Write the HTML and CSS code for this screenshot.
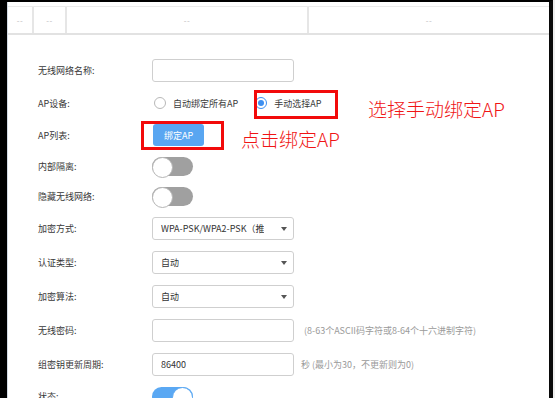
FILE: index.html
```html
<!DOCTYPE html>
<html lang="zh-CN">
<head>
<meta charset="utf-8">
<link rel="stylesheet" href="styles.css">
</head>
<body>
<div class="frame">
  <div class="panel">
    <div class="thead">
      <div class="th c1">--</div>
      <div class="th c2">--</div>
      <div class="th c3">--</div>
      <div class="th c4">--</div>
    </div>
    <div class="form">
      <div class="row">
        <span class="label">无线网络名称:</span>
        <div class="field"></div>
      </div>
      <div class="row row-radio">
        <span class="label">AP设备:</span>
        <div class="radios">
          <span class="radio"><i class="circle"></i>自动绑定所有AP</span>
          <span class="radio on"><i class="circle"></i>手动选择AP</span>
        </div>
      </div>
      <div class="row row-btn">
        <span class="label">AP列表:</span>
        <span class="btn">绑定AP</span>
      </div>
      <div class="row row-toggle">
        <span class="label">内部隔离:</span>
        <span class="toggle"></span>
      </div>
      <div class="row row-toggle">
        <span class="label">隐藏无线网络:</span>
        <span class="toggle"></span>
      </div>
      <div class="row">
        <span class="label">加密方式:</span>
        <div class="field select"><span class="val">WPA-PSK/WPA2-PSK（推</span><i class="arrow"></i></div>
      </div>
      <div class="row">
        <span class="label">认证类型:</span>
        <div class="field select"><span class="val">自动</span><i class="arrow"></i></div>
      </div>
      <div class="row">
        <span class="label">加密算法:</span>
        <div class="field select"><span class="val">自动</span><i class="arrow"></i></div>
      </div>
      <div class="row">
        <span class="label">无线密码:</span>
        <div class="field"></div>
        <span class="hint">(8-63个ASCII码字符或8-64个十六进制字符)</span>
      </div>
      <div class="row">
        <span class="label">组密钥更新周期:</span>
        <div class="field"><span class="val">86400</span></div>
        <span class="hint hint-sec">秒 (最小为30，不更新则为0)</span>
      </div>
      <div class="row row-toggle">
        <span class="label">状态:</span>
        <span class="toggle on"></span>
      </div>
    </div>
    <div class="mark mark1"></div>
    <div class="mark mark2"></div>
    <div class="note note1">选择手动绑定AP</div>
    <div class="note note2">点击绑定AP</div>
  </div>
</div>
</body>
</html>
```

FILE: styles.css
```css
* { box-sizing: border-box; margin: 0; padding: 0; }

html, body {
  width: 555px;
  height: 398px;
  overflow: hidden;
  background: #eeeeee;
}

body {
  font-family: "Noto Sans CJK SC", "Noto Sans", sans-serif;
  font-size: 9px;
  color: #3a3a3a;
}

.frame {
  width: 553px;
  height: 398px;
  background: #000;
  border-left: 7px solid #000;
  border-top: 2px solid #000;
  border-right: 4px solid #0a0a0a;
}

.panel {
  position: relative;
  width: 542px;
  height: 396px;
  background: #fff;
  border-left: 1px solid #d3dae4;
  overflow: hidden;
}

.thead {
  display: flex;
  margin-top: 4px;
  height: 29px;
  border-top: 1px solid #ebebeb;
  border-bottom: 2px solid #e2e2e2;
}

.th {
  display: flex;
  align-items: center;
  justify-content: center;
  font-size: 8px;
  letter-spacing: 0.5px;
  color: #bdbdbd;
  border-right: 2px solid #e6e6e6;
}

.c1 { width: 26px; }
.c2 { width: 33px; }
.c3 { width: 242px; }
.c4 { flex: 1; border-right: none; }

.form {
  display: flex;
  flex-direction: column;
  gap: 11px;
  padding: 24px 0 0 30px;
}

.row {
  display: flex;
  align-items: center;
  height: 23px;
}

.row-radio { height: 20px; }
.row-btn { height: 22px; }
.row-toggle { height: 19px; }

.label {
  width: 114px;
  flex: none;
  color: #383838;
}

.field {
  display: flex;
  align-items: center;
  width: 142px;
  height: 23px;
  border: 1px solid #cfcfcf;
  border-radius: 3px;
  background: #fff;
  padding: 0 0 0 8px;
  color: #333;
}

.select {
  justify-content: space-between;
  padding-right: 6px;
}

.val { white-space: nowrap; overflow: hidden; }

.arrow {
  width: 0;
  height: 0;
  border-left: 3px solid transparent;
  border-right: 3px solid transparent;
  border-top: 4px solid #555;
}

.hint {
  margin-left: 10px;
  color: #9a9a9a;
  font-size: 9px;
  white-space: nowrap;
}

.hint-sec { margin-left: 7px; }

.radios {
  display: flex;
  align-items: center;
  gap: 17px;
  margin-left: 2px;
}

.radio {
  display: flex;
  align-items: center;
  color: #3a3a3a;
}

.circle {
  display: inline-flex;
  align-items: center;
  justify-content: center;
  width: 12px;
  height: 12px;
  border: 1px solid #b8b8b8;
  border-radius: 50%;
  margin-right: 7px;
  background: #fff;
}

.radio.on .circle { border-color: #3d8ff0; }

.radio.on .circle::after {
  content: "";
  width: 6px;
  height: 6px;
  border-radius: 50%;
  background: #3d8ff0;
}

.btn {
  display: flex;
  align-items: center;
  justify-content: center;
  width: 51px;
  height: 22px;
  margin-left: 1px;
  background: #59a6f1;
  color: #fff;
  border-radius: 3px;
  font-size: 9px;
}

.toggle {
  position: relative;
  width: 41px;
  height: 19px;
  border-radius: 10px;
  background: #a0a0a0;
}

.toggle::after {
  content: "";
  position: absolute;
  left: 0;
  top: 0;
  width: 19px;
  height: 19px;
  border-radius: 50%;
  background: #fff;
  border: 1px solid #b5b5b5;
}

.toggle.on { background: #5aa8f3; }
.toggle.on::after { left: auto; right: 0; border-color: #5aa8f3; }

.mark {
  position: absolute;
  border: 3px solid #f20a0a;
}

.mark1 { left: 246px; top: 88px; width: 84px; height: 29px; }
.mark2 { left: 133px; top: 119px; width: 83px; height: 29px; }

.note {
  position: absolute;
  font-size: 19px;
  line-height: 22px;
  font-weight: 300;
  color: #f01515;
  white-space: nowrap;
}

.note1 { left: 360px; top: 96px; }
.note2 { left: 233px; top: 126px; }
```
